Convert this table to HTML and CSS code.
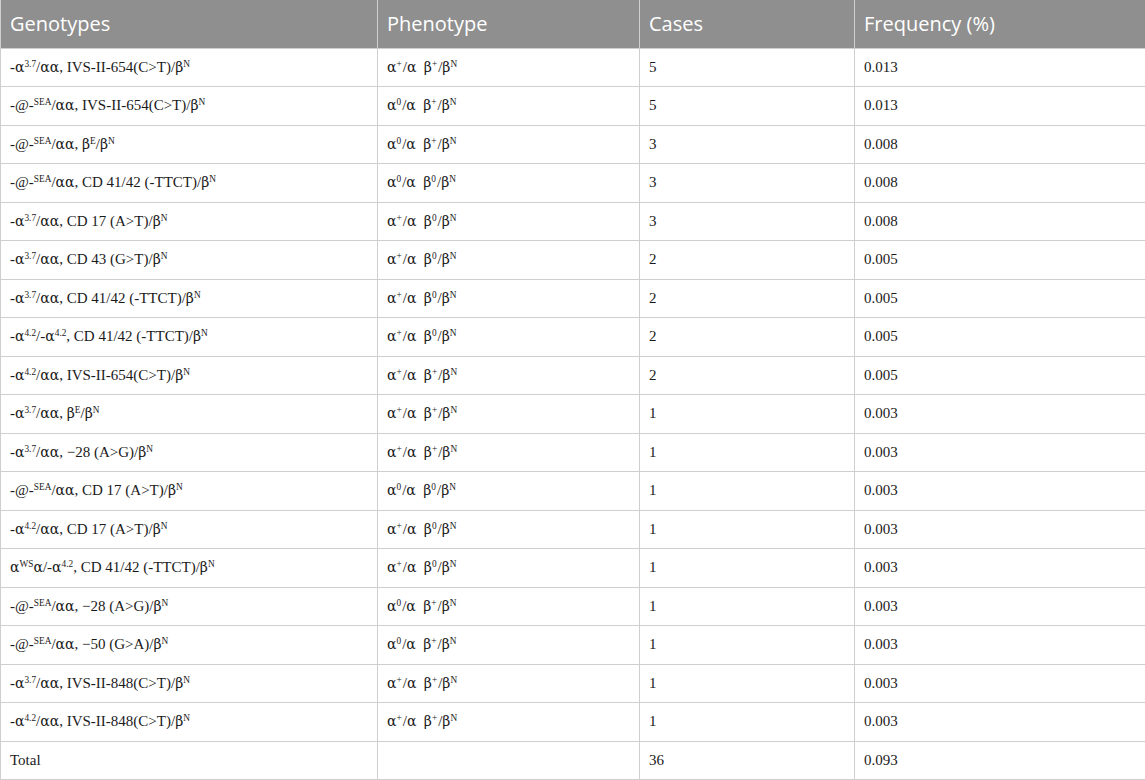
FILE: index.html
```html
<!DOCTYPE html>
<html>
<head>
<meta charset="utf-8">
<link rel="stylesheet" href="styles.css">
</head>
<body>
<table class="data">
<colgroup>
<col class="c1"><col class="c2"><col class="c3"><col class="c4">
</colgroup>
<thead>
<tr><th>Genotypes</th><th>Phenotype</th><th>Cases</th><th>Frequency (%)</th></tr>
</thead>
<tbody>
<tr><td>-<i class="g">α</i><sup>3.7</sup>/<i class="g">αα</i>, IVS-II-654(C&gt;T)/<i class="g">β</i><sup>N</sup></td><td class="ph"><i class="g">α</i><sup>+</sup>/<i class="g">α β</i><sup>+</sup>/<i class="g">β</i><sup>N</sup></td><td>5</td><td>0.013</td></tr>
<tr><td>-@-<sup>SEA</sup>/<i class="g">αα</i>, IVS-II-654(C&gt;T)/<i class="g">β</i><sup>N</sup></td><td class="ph"><i class="g">α</i><sup>0</sup>/<i class="g">α β</i><sup>+</sup>/<i class="g">β</i><sup>N</sup></td><td>5</td><td>0.013</td></tr>
<tr><td>-@-<sup>SEA</sup>/<i class="g">αα</i>, <i class="g">β</i><sup>E</sup>/<i class="g">β</i><sup>N</sup></td><td class="ph"><i class="g">α</i><sup>0</sup>/<i class="g">α β</i><sup>+</sup>/<i class="g">β</i><sup>N</sup></td><td>3</td><td>0.008</td></tr>
<tr><td>-@-<sup>SEA</sup>/<i class="g">αα</i>, CD 41/42 (-TTCT)/<i class="g">β</i><sup>N</sup></td><td class="ph"><i class="g">α</i><sup>0</sup>/<i class="g">α β</i><sup>0</sup>/<i class="g">β</i><sup>N</sup></td><td>3</td><td>0.008</td></tr>
<tr><td>-<i class="g">α</i><sup>3.7</sup>/<i class="g">αα</i>, CD 17 (A&gt;T)/<i class="g">β</i><sup>N</sup></td><td class="ph"><i class="g">α</i><sup>+</sup>/<i class="g">α β</i><sup>0</sup>/<i class="g">β</i><sup>N</sup></td><td>3</td><td>0.008</td></tr>
<tr><td>-<i class="g">α</i><sup>3.7</sup>/<i class="g">αα</i>, CD 43 (G&gt;T)/<i class="g">β</i><sup>N</sup></td><td class="ph"><i class="g">α</i><sup>+</sup>/<i class="g">α β</i><sup>0</sup>/<i class="g">β</i><sup>N</sup></td><td>2</td><td>0.005</td></tr>
<tr><td>-<i class="g">α</i><sup>3.7</sup>/<i class="g">αα</i>, CD 41/42 (-TTCT)/<i class="g">β</i><sup>N</sup></td><td class="ph"><i class="g">α</i><sup>+</sup>/<i class="g">α β</i><sup>0</sup>/<i class="g">β</i><sup>N</sup></td><td>2</td><td>0.005</td></tr>
<tr><td>-<i class="g">α</i><sup>4.2</sup>/-<i class="g">α</i><sup>4.2</sup>, CD 41/42 (-TTCT)/<i class="g">β</i><sup>N</sup></td><td class="ph"><i class="g">α</i><sup>+</sup>/<i class="g">α β</i><sup>0</sup>/<i class="g">β</i><sup>N</sup></td><td>2</td><td>0.005</td></tr>
<tr><td>-<i class="g">α</i><sup>4.2</sup>/<i class="g">αα</i>, IVS-II-654(C&gt;T)/<i class="g">β</i><sup>N</sup></td><td class="ph"><i class="g">α</i><sup>+</sup>/<i class="g">α β</i><sup>+</sup>/<i class="g">β</i><sup>N</sup></td><td>2</td><td>0.005</td></tr>
<tr><td>-<i class="g">α</i><sup>3.7</sup>/<i class="g">αα</i>, <i class="g">β</i><sup>E</sup>/<i class="g">β</i><sup>N</sup></td><td class="ph"><i class="g">α</i><sup>+</sup>/<i class="g">α β</i><sup>+</sup>/<i class="g">β</i><sup>N</sup></td><td>1</td><td>0.003</td></tr>
<tr><td>-<i class="g">α</i><sup>3.7</sup>/<i class="g">αα</i>, −28 (A&gt;G)/<i class="g">β</i><sup>N</sup></td><td class="ph"><i class="g">α</i><sup>+</sup>/<i class="g">α β</i><sup>+</sup>/<i class="g">β</i><sup>N</sup></td><td>1</td><td>0.003</td></tr>
<tr><td>-@-<sup>SEA</sup>/<i class="g">αα</i>, CD 17 (A&gt;T)/<i class="g">β</i><sup>N</sup></td><td class="ph"><i class="g">α</i><sup>0</sup>/<i class="g">α β</i><sup>0</sup>/<i class="g">β</i><sup>N</sup></td><td>1</td><td>0.003</td></tr>
<tr><td>-<i class="g">α</i><sup>4.2</sup>/<i class="g">αα</i>, CD 17 (A&gt;T)/<i class="g">β</i><sup>N</sup></td><td class="ph"><i class="g">α</i><sup>+</sup>/<i class="g">α β</i><sup>0</sup>/<i class="g">β</i><sup>N</sup></td><td>1</td><td>0.003</td></tr>
<tr><td><i class="g">α</i><sup>WS</sup><i class="g">α</i>/-<i class="g">α</i><sup>4.2</sup>, CD 41/42 (-TTCT)/<i class="g">β</i><sup>N</sup></td><td class="ph"><i class="g">α</i><sup>+</sup>/<i class="g">α β</i><sup>0</sup>/<i class="g">β</i><sup>N</sup></td><td>1</td><td>0.003</td></tr>
<tr><td>-@-<sup>SEA</sup>/<i class="g">αα</i>, −28 (A&gt;G)/<i class="g">β</i><sup>N</sup></td><td class="ph"><i class="g">α</i><sup>0</sup>/<i class="g">α β</i><sup>+</sup>/<i class="g">β</i><sup>N</sup></td><td>1</td><td>0.003</td></tr>
<tr><td>-@-<sup>SEA</sup>/<i class="g">αα</i>, −50 (G&gt;A)/<i class="g">β</i><sup>N</sup></td><td class="ph"><i class="g">α</i><sup>0</sup>/<i class="g">α β</i><sup>+</sup>/<i class="g">β</i><sup>N</sup></td><td>1</td><td>0.003</td></tr>
<tr><td>-<i class="g">α</i><sup>3.7</sup>/<i class="g">αα</i>, IVS-II-848(C&gt;T)/<i class="g">β</i><sup>N</sup></td><td class="ph"><i class="g">α</i><sup>+</sup>/<i class="g">α β</i><sup>+</sup>/<i class="g">β</i><sup>N</sup></td><td>1</td><td>0.003</td></tr>
<tr><td>-<i class="g">α</i><sup>4.2</sup>/<i class="g">αα</i>, IVS-II-848(C&gt;T)/<i class="g">β</i><sup>N</sup></td><td class="ph"><i class="g">α</i><sup>+</sup>/<i class="g">α β</i><sup>+</sup>/<i class="g">β</i><sup>N</sup></td><td>1</td><td>0.003</td></tr>
<tr><td>Total</td><td></td><td>36</td><td>0.093</td></tr>
</tbody>
</table>
</body>
</html>
```
FILE: styles.css
```css
html, body {
  margin: 0;
  padding: 0;
  background: #ffffff;
}
.data {
  width: 1145px;
  border-collapse: collapse;
  table-layout: fixed;
  font-family: "Liberation Serif", "Times New Roman", serif;
  color: #1a1a1a;
}
.c1 { width: 377px; }
.c2 { width: 262px; }
.c3 { width: 215px; }
.c4 { width: 291px; }
.data th {
  background: #8f8f8f;
  color: #ffffff;
  font-family: "Open Sans", "Liberation Sans", sans-serif;
  font-weight: 400;
  font-size: 20px;
  text-align: left;
  height: 48px;
  padding: 0 0 0 9px;
  border: 1px solid #cfcfcf;
  border-top: none;
  box-sizing: border-box;
}
.data td {
  font-size: 15px;
  height: 38.5px;
  padding: 0 0 0 9px;
  border: 1px solid #cfcfcf;
  box-sizing: border-box;
  vertical-align: middle;
  white-space: nowrap;
}
.data .g {
  font-style: normal;
  font-family: "DejaVu Serif", "Liberation Serif", serif;
  font-size: 14px;
}
.data .ph {
  word-spacing: 3px;
}
.data .ph sup {
  padding-right: 1px;
}
.data sup {
  font-size: 0.62em;
  line-height: 0;
  vertical-align: 0.55em;
}
```
